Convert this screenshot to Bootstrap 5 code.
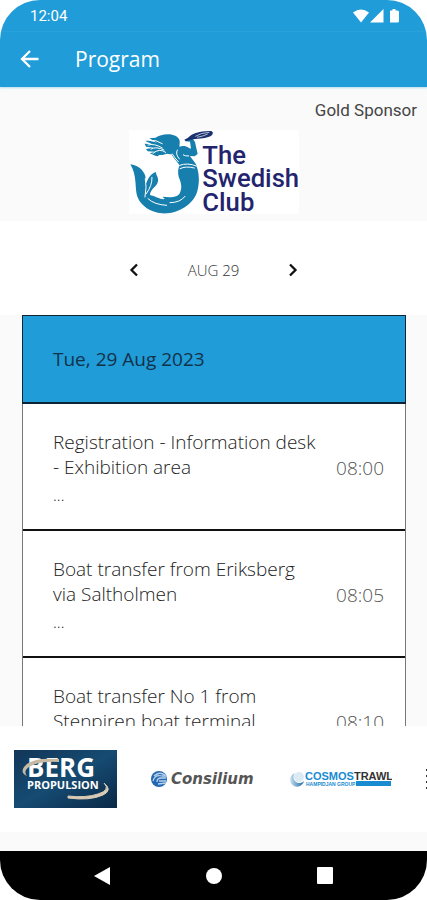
<!DOCTYPE html>
<html lang="en">
<head>
<meta charset="utf-8">
<meta name="viewport" content="width=device-width, initial-scale=1">
<title>Program</title>
<link href="https://cdn.jsdelivr.net/npm/bootstrap@5.3.0/dist/css/bootstrap.min.css" rel="stylesheet">
<style>
  body { font-family: "Open Sans", "Noto Sans", sans-serif; background: #fff; color: #222; }
  .screen { background: #fafafa; border-radius: 40px; }
  .brand-blue { background: #209cd8; }
  .status { height: 32px; padding: 0 27px 0 30px; font: 400 15px/32px Roboto, sans-serif; }
  .appbar { height: 55px; padding: 0 0 2px 20px; gap: 35px; box-shadow: 0 1px 2px #b5dced; }
  .appbar h1 { font-size: 21px; line-height: 28px; font-weight: 400; }
  .plain { background: none; border: 0; padding: 0; line-height: 0; color: inherit; }
  .tier { font: 400 17px/24px Roboto, sans-serif; color: #444; padding: 11px 10px 8px 0; }
  .sponsor { height: 134px; }
  .dates { height: 94px; gap: 44px; padding-top: 4px; font-size: 15px; font-weight: 300; color: #333; }
  .agenda { margin: 0 21px 0 22px; }
  .agenda-list { border: solid #777; border-width: 0 1px; }
  .day { height: 89px; padding-left: 30px; border: solid #0c2433; border-width: 1px 1px 2px; margin: 0 -1px; font-size: 19px; font-weight: 400; color: #12324a; }
  .slot { padding: 26px 21px 19px 30px; border-bottom: 2px solid #111; background: #fff; font-size: 19px; line-height: 25px; font-weight: 300; gap: 16px; }
  .slot h3 { font: inherit; margin: 0; }
  .slot p { font-size: 16px; line-height: 30px; margin: 0; }
  .slot time { color: #555; padding-bottom: 4px; }
  .partners { height: 106px; padding-left: 14px; gap: 33px; background: #fff; }
  .spacer { height: 19px; }
  .sysnav { height: 49px; background: #000; color: #fff; padding: 0 94px; }
</style>
<script src="https://cdn.jsdelivr.net/npm/bootstrap@5.3.0/dist/js/bootstrap.bundle.min.js"></script>
</head>
<body>
<div class="screen vh-100 d-flex flex-column overflow-hidden">
  <header class="brand-blue text-white flex-shrink-0">
    <div class="status d-flex justify-content-between align-items-center">
      <span>12:04</span>
      <svg width="47" height="14" viewBox="0 0 47 14" fill="#fff" aria-hidden="true">
        <path d="M0 3.5Q8-2.5 16 3.5L8 13.5z"/><path d="M17 13.5L30.500 0v13.500z"/><path d="M37.500 1.500h2V0h3v1.500h2q1.500 0 1.500 1.500v9q0 1.500-1.500 1.500h-6Q37 14 37 12.500V2z"/>
      </svg>
    </div>
    <div class="appbar d-flex align-items-center">
      <button class="plain" type="button" aria-label="Back"><svg width="20" height="20" viewBox="0 0 20 20" fill="none" stroke="#fff" stroke-width="2.300"><path d="M18.500 10H3M10 2L2 10l8 8"/></svg></button>
      <h1 class="m-0">Program</h1>
    </div>
  </header>

  <section class="sponsor flex-shrink-0">
    <div class="tier text-end">Gold Sponsor</div>
    <div class="text-center lh-1">
      <svg width="170" height="84" viewBox="27 30 510 252" role="img" aria-label="The Swedish Club">
        <path fill="#fff" d="M27 30h510v252H27z"/>
        <g transform="translate(24 18)">
          <g fill="#167fae">
            <path d="M7 115C28 119 44 128 52 150C53 160 53 166 55 172C62 150 72 142 84 138C84 150 92 152 90 166C87 183 67 188 66 207C82 210 98 222 111 219C106 215 104 212 104 212C128 215 150 214 156 200C164 182 158 168 152 152C149 139 150 125 156 117L205 119C214 140 215 170 208 195C200 228 162 258 118 262C70 265 34 238 26 205C21 178 26 146 7 115z"/>
            <path d="M83 35C101 21 143 20 153 39C158 49 153 56 155 62C164 59 174 60 183 66L189 68L186 47L173 46L175 40L193 36L201 48L209 84L200 91L186 90C192 101 203 108 206 121L155 119C151 110 138 99 130 84C124 87 119 80 111 85C101 90 96 83 88 91C80 90 73 84 65 82L82 77L59 76L54 69L78 65L54 62L50 53L73 55L52 45C65 42 76 47 87 50L64 37z"/>
          </g>
          <g fill="none" stroke="#fff" stroke-width="3" stroke-linecap="round">
            <path d="M64 43Q84 40 103 53M60 57Q79 51 103 66M69 69Q85 60 108 72M75 82Q94 65 113 79M133 84Q139 95 151 107M148 72Q141 84 154 99M155 118Q179 109 205 120M166 87Q172 91 182 90M156 128Q174 119 199 126M52 158Q57 182 51 213M72 154Q73 178 55 203M60 218Q78 236 116 238M126 230Q157 230 171 211"/>
          </g>
        </g>
        <path d="M203 54C214 42 238 32 274 33Q284 38 273 48C252 57 230 56 214 59L197 64L193 59z" fill="#1b3270"/>
        <path d="M226 49Q243 38 268 37M231 52Q249 49 263 42" fill="none" stroke="#fff" stroke-width="2"/>
        <g font-family="Roboto, sans-serif" font-size="77" font-weight="500" fill="#24246e"><text x="247" y="131">The</text><text x="247" y="202">Swedish</text><text x="247" y="273">Club</text></g>
      </svg>
    </div>
  </section>

  <nav class="dates bg-white d-flex justify-content-center align-items-center flex-shrink-0" aria-label="Day">
    <button class="plain" type="button" aria-label="Previous day"><svg width="20" height="20" viewBox="0 0 20 20" fill="none" stroke="#111" stroke-width="2.300"><path d="M13 4.500L7.500 10l5.500 5.500"/></svg></button>
    <span>AUG 29</span>
    <button class="plain" type="button" aria-label="Next day"><svg width="20" height="20" viewBox="0 0 20 20" fill="none" stroke="#111" stroke-width="2.300"><path d="M7 4.500l5.500 5.500L7 15.500"/></svg></button>
  </nav>

  <main class="agenda flex-grow-1 overflow-hidden">
    <div class="agenda-list">
      <h2 class="day brand-blue d-flex align-items-center">Tue, 29 Aug 2023</h2>
      <article class="slot d-flex align-items-center justify-content-between">
        <div><h3>Registration - Information desk - Exhibition area</h3><p>...</p></div><time>08:00</time>
      </article>
      <article class="slot d-flex align-items-center justify-content-between">
        <div><h3>Boat transfer from Eriksberg via Saltholmen</h3><p>...</p></div><time>08:05</time>
      </article>
      <article class="slot d-flex align-items-center justify-content-between">
        <div><h3>Boat transfer No 1 from Stenpiren boat terminal</h3><p>...</p></div><time>08:10</time>
      </article>
    </div>
  </main>

  <section class="partners d-flex align-items-center overflow-hidden flex-shrink-0" aria-label="Partners">
    <svg class="flex-shrink-0" width="103" height="58" viewBox="0 0 103 58" role="img" aria-label="Berg Propulsion">
      <defs><linearGradient id="navy" x2="1" y2="1"><stop stop-color="#123658"/><stop offset=".5" stop-color="#164b72"/><stop offset="1" stop-color="#092846"/></linearGradient></defs>
      <path d="M0 0h103v58H0z" fill="url(#navy)"/>
      <g fill="#fff" font-family="Open Sans, sans-serif" font-weight="700"><text x="13" y="27" font-size="26">BERG</text><text x="13" y="39" font-size="11">PROPULSION</text></g>
      <path d="M45 9Q17 7 10 17Q6 23 13 26Q9 21 15 17Q25 11 45 12z" fill="#c8b9a2"/>
      <path d="M90 33Q97 40 84 44Q72 48 54 46L54 48Q76 51 89 45Q99 40 90 33z" fill="#d9cbb5" stroke="#d9cbb5"/>
    </svg>
    <svg class="flex-shrink-0" width="106" height="20" viewBox="0 0 106 20" role="img" aria-label="Consilium">
      <circle cx="9" cy="10" r="8" fill="#2468b2"/>
      <path d="M4 7Q9 2 15 6M3 12Q5 5 12 7h5M7 13Q7 9 11 9h5M8 15l8-1M9 12h7" fill="none" stroke="#b9d3ee" stroke-width="1.300"/>
      <text x="21" y="15" font-family="DejaVu Sans, sans-serif" font-size="15" font-style="italic" font-weight="700" fill="#555">Consilium</text>
    </svg>
    <svg class="flex-shrink-0" width="103" height="20" viewBox="0 0 103 20" role="img" aria-label="Cosmos Trawl">
      <defs><linearGradient id="ball"><stop stop-color="#c9dfef"/><stop offset="1" stop-color="#1769a5"/></linearGradient></defs>
      <path d="M6 4A7 7 0 1 0 15 12A5 5 0 0 1 6 4z" fill="url(#ball)"/><circle cx="10" cy="8" r="5" fill="#dceaf4"/>
      <path d="M67 12h35v5H67z" fill="#188bd1"/>
      <g font-family="Liberation Sans, sans-serif" font-weight="700"><text x="16" y="11" font-size="11" fill="#188bd1">COSMOS<tspan fill="#333">TRAWL</tspan></text><text x="17" y="17" font-size="5" fill="#188bd1">HAMPIDJAN GROUP</text></g>
    </svg>
    <svg class="flex-shrink-0" width="20" height="24" viewBox="0 0 20 24" aria-hidden="true"><path d="M1 2h3v2H1zM1 8h3v2H1zM1 14h3v2H1zM1 20h3v2H1z" fill="#333"/></svg>
  </section>
  <div class="spacer flex-shrink-0"></div>

  <footer class="sysnav d-flex justify-content-between align-items-center flex-shrink-0">
    <button class="plain" type="button" aria-label="System back"><svg width="16" height="18" viewBox="0 0 16 18"><path d="M0 9L16 0v18z" fill="#fff"/></svg></button>
    <button class="plain" type="button" aria-label="Home"><svg width="16" height="16" viewBox="0 0 16 16"><circle cx="8" cy="8" r="8" fill="#fff"/></svg></button>
    <button class="plain" type="button" aria-label="Recent apps"><svg width="16" height="17" viewBox="0 0 16 17"><rect width="16" height="17" rx="1" fill="#fff"/></svg></button>
  </footer>
</div>
</body>
</html>
